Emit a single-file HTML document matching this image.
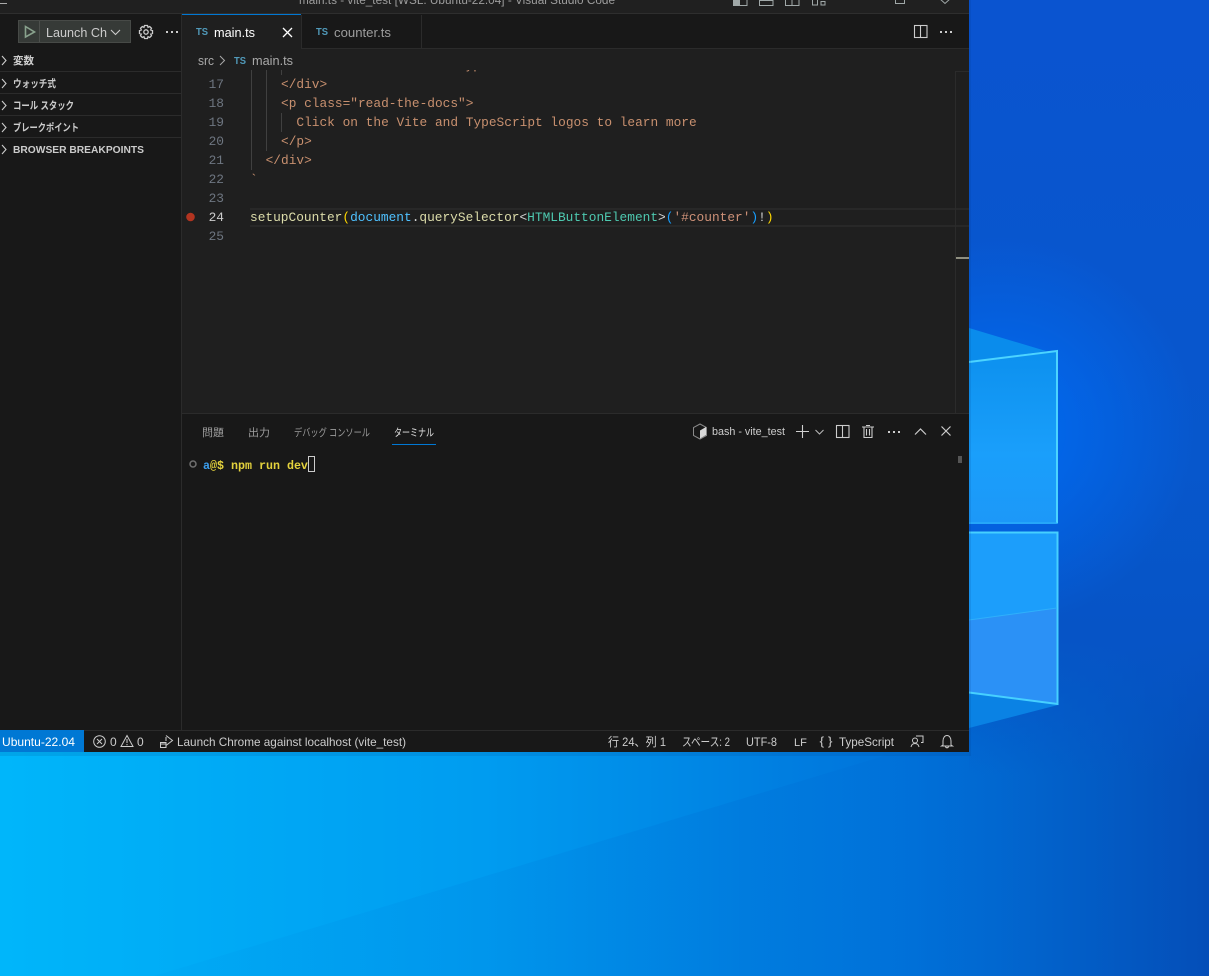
<!DOCTYPE html>
<html><head><meta charset="utf-8"><title>main.ts - vite_test - Visual Studio Code</title>
<style>
html,body{margin:0;padding:0;width:1209px;height:976px;overflow:hidden;background:#0757cf}
svg{display:block}
.ui{font-family:"Liberation Sans","Noto Sans CJK JP",sans-serif}
.m{font-family:"Liberation Mono",monospace;font-size:12.83px;white-space:pre}
.b{font-weight:700}
.side{font-size:10.5px;font-weight:700;fill:#cccccc}
.tab{font-size:10.5px;fill:#9d9d9d}
.st{font-size:12px;fill:#cccccc}
.ln{fill:#6e7681;text-anchor:end}
.s{fill:#c8906f}
.ts{font-size:10px;font-weight:700;fill:#519aba}
.ic{fill:none;stroke:#cccccc;stroke-width:1.1}
</style></head><body>
<svg width="1209" height="976" viewBox="0 0 1209 976" xmlns="http://www.w3.org/2000/svg" class="ui">
<defs>
<linearGradient id="bot" x1="0" y1="0" x2="1" y2="0"><stop offset="0" stop-color="#00b6fa"/><stop offset=".4" stop-color="#009cf0"/><stop offset=".75" stop-color="#0072da"/><stop offset="1" stop-color="#044eb8"/></linearGradient>
<linearGradient id="top" x1="0" y1="0" x2="0" y2="1"><stop offset="0" stop-color="#0a54d0"/><stop offset=".6" stop-color="#0757cc"/><stop offset=".82" stop-color="#0654c6"/><stop offset="1" stop-color="#0654c6" stop-opacity="0"/></linearGradient>
<radialGradient id="glow" gradientUnits="userSpaceOnUse" cx="1000" cy="430" r="195"><stop offset="0" stop-color="#006cf4" stop-opacity=".95"/><stop offset=".5" stop-color="#006cf4" stop-opacity=".5"/><stop offset="1" stop-color="#006cf4" stop-opacity="0"/></radialGradient>
<linearGradient id="p1" x1="0" y1="0" x2="0" y2="1"><stop offset="0" stop-color="#0c90ee"/><stop offset=".6" stop-color="#1a9ffb"/><stop offset="1" stop-color="#1c98f8"/></linearGradient>
<linearGradient id="beam" gradientUnits="userSpaceOnUse" x1="154" y1="0" x2="1000" y2="0"><stop offset="0" stop-color="#0050c0" stop-opacity=".03"/><stop offset=".7" stop-color="#0050c0" stop-opacity=".12"/><stop offset="1" stop-color="#0050c0" stop-opacity="0"/></linearGradient>
</defs>

<!-- wallpaper -->
<rect width="1209" height="976" fill="url(#bot)"/>
<rect x="969" y="0" width="240" height="775" fill="url(#top)"/>
<rect x="969" y="230" width="240" height="400" fill="url(#glow)"/>
<polygon points="887,755 1000,752 1000,976 154,976" fill="url(#beam)"/>
<polygon points="969,328 1046,351 969,362" fill="#0a8cec"/>
<polygon points="969,362 1058,350 1058,524 969,524" fill="url(#p1)"/>
<polygon points="969,532 1058,532 1058,608 969,620" fill="#1c9efb"/>
<polygon points="969,620 1058,608 1058,705 969,693" fill="#2b91f6"/>
<polygon points="969,693 1058,705 969,728" fill="#0a82e4"/>
<path d="M969 362L1057 351V523" fill="none" stroke="#4cd4ff" stroke-width="2"/>
<path d="M969 523H1057" fill="none" stroke="#2fb4fa" stroke-width="1"/>
<path d="M969 532.500H1057.500V704L969 692.500" fill="none" stroke="#46d0ff" stroke-width="2"/>
<path d="M969 620L1057 608" fill="none" stroke="#2fb0fb" stroke-width="1"/>

<!-- window -->
<rect x="0" y="0" width="971" height="756" fill="#003070" opacity=".12"/>
<rect x="0" y="0" width="969" height="752" fill="#181818"/>

<!-- title bar -->
<rect x="0" y="0" width="969" height="14" fill="#202020"/>
<rect x="0" y="13" width="969" height="1" fill="#2e2e2e"/>
<text x="299" y="4" font-size="11.500" fill="#9d9d9d" textLength="316" lengthAdjust="spacingAndGlyphs">main.ts - vite_test [WSL: Ubuntu-22.04] - Visual Studio Code</text>
<rect x="0" y="3" width="7" height="1" fill="#aaa"/>
<g fill="none" stroke="#a0a8a8" stroke-width="1">
<path d="M733.500 -6H747V5.500H733.500Z"/><path d="M759.500 -6H773V5.500H759.500Z"/><path d="M785.500 -6H799V5.500H785.500ZM792 -6V5.500"/>
<path d="M812.500 -2H817.500V5H812.500ZM821 1.500H825V5H821Z"/>
<path d="M895.500 -6H904.500V3.500H895.500Z"/><path d="M939 -2L945 3.500L951 -2"/>
</g>
<path d="M733.500 -6H740V5.500H733.500Z" fill="#a0a8a8"/><path d="M759.500 -6H773V1H759.500Z" fill="#a0a8a8"/>

<!-- sidebar -->
<rect x="181" y="14" width="1" height="716" fill="#2b2b2b"/>
<rect x="18.500" y="20.500" width="112" height="22" fill="#363a37" stroke="#474a47"/>
<rect x="39" y="21" width="1" height="21" fill="#4d504d"/>
<path d="M25.500 26.500V37L34.500 32Z" fill="none" stroke="#89a28d" stroke-width="1.600"/>
<text x="46" y="37" font-size="13" fill="#cccccc" textLength="61" lengthAdjust="spacingAndGlyphs">Launch Ch</text>
<path d="M111 30L115.500 34.500L120 30" class="ic"/>
<g transform="translate(146 32)" fill="none" stroke="#cccccc" stroke-width="1.300">
<circle r="2.200"/>
<path d="M-1.500 -6.500H1.500L2 -4.700L3.700 -5.500L5.500 -3.700L4.700 -2L6.500 -1.500V1.500L4.700 2L5.500 3.700L3.700 5.500L2 4.700L1.500 6.500H-1.500L-2 4.700L-3.700 5.500L-5.500 3.700L-4.700 2L-6.500 1.500V-1.500L-4.700 -2L-5.500 -3.700L-3.700 -5.500L-2 -4.700Z"/>
</g>
<g fill="#cccccc"><rect x="166" y="31" width="2" height="2"/><rect x="171" y="31" width="2" height="2"/><rect x="176" y="31" width="2" height="2"/></g>

<g fill="#2b2b2b"><rect x="0" y="71" width="181" height="1"/><rect x="0" y="93" width="181" height="1"/><rect x="0" y="115" width="181" height="1"/><rect x="0" y="137" width="181" height="1"/></g>
<g class="ic"><path d="M2 56L6 60.500L2 65"/><path d="M2 79L6 83.500L2 88"/><path d="M2 101L6 105.500L2 110"/><path d="M2 123L6 127.500L2 132"/><path d="M2 145L6 149.500L2 154"/></g>
<text x="13" y="64" class="side">変数</text>
<text x="13" y="87" class="side" textLength="43" lengthAdjust="spacingAndGlyphs">ウォッチ式</text>
<text x="13" y="109" class="side" textLength="61" lengthAdjust="spacingAndGlyphs">コール スタック</text>
<text x="13" y="131" class="side" textLength="66" lengthAdjust="spacingAndGlyphs">ブレークポイント</text>
<text x="13" y="153" class="side" textLength="131" lengthAdjust="spacingAndGlyphs">BROWSER BREAKPOINTS</text>

<!-- tabs -->
<rect x="182" y="14" width="787" height="34" fill="#181818"/>
<rect x="182" y="48" width="787" height="1" fill="#2b2b2b"/>
<rect x="182" y="14" width="119" height="35" fill="#1f1f1f"/>
<rect x="182" y="14" width="119" height="1" fill="#0078d4"/>
<rect x="301" y="15" width="1" height="33" fill="#2b2b2b"/>
<rect x="421" y="15" width="1" height="33" fill="#2b2b2b"/>
<text x="196" y="35" class="ts" textLength="12" lengthAdjust="spacingAndGlyphs">TS</text>
<text x="214" y="37" font-size="13" fill="#ffffff" textLength="41" lengthAdjust="spacingAndGlyphs">main.ts</text>
<path d="M283 28L292 37M292 28L283 37" fill="none" stroke="#ffffff" stroke-width="1.300"/>
<text x="316" y="35" class="ts" textLength="12" lengthAdjust="spacingAndGlyphs">TS</text>
<text x="334" y="37" font-size="13" fill="#9d9d9d" textLength="57" lengthAdjust="spacingAndGlyphs">counter.ts</text>
<g fill="none" stroke="#cccccc" stroke-width="1.100"><rect x="914.500" y="25.500" width="12.500" height="12"/><path d="M920.500 25.500V37.500"/></g>
<g fill="#cccccc"><rect x="940" y="31" width="2" height="2"/><rect x="945" y="31" width="2" height="2"/><rect x="950" y="31" width="2" height="2"/></g>

<!-- breadcrumb + editor -->
<rect x="182" y="49" width="787" height="364" fill="#1f1f1f"/>
<text x="198" y="65" font-size="12.500" fill="#a9a9a9" textLength="16" lengthAdjust="spacingAndGlyphs">src</text>
<path d="M220 56L224.500 60.500L220 65" fill="none" stroke="#a9a9a9"/>
<text x="234" y="64" class="ts" textLength="12" lengthAdjust="spacingAndGlyphs">TS</text>
<text x="252" y="65" font-size="12.500" fill="#a9a9a9" textLength="41" lengthAdjust="spacingAndGlyphs">main.ts</text>

<!-- current line -->
<rect x="250" y="208" width="719" height="2" fill="#282828"/>
<rect x="250" y="225" width="719" height="2" fill="#282828"/>
<!-- overview ruler -->
<rect x="955" y="71" width="1" height="342" fill="#2b2b2b"/>
<rect x="955" y="71" width="14" height="1" fill="#2b2b2b"/>
<rect x="956" y="257" width="13" height="2" fill="#8f8f80"/>
<!-- guides -->
<g fill="#404040"><rect x="251" y="70" width="1" height="100"/><rect x="266" y="70" width="1" height="81"/><rect x="281" y="70" width="1" height="5"/><rect x="281" y="113" width="1" height="19"/></g>

<svg x="182" y="70" width="773" height="343" viewBox="182 70 773 343">
<text x="250" y="69" class="m s" xml:space="preserve">      &lt;button id="counter" type="button"&gt;&lt;/button&gt;</text>
</svg>
<g class="m">
<text x="224" y="88" class="m ln">17</text>
<text x="224" y="107" class="m ln">18</text>
<text x="224" y="126" class="m ln">19</text>
<text x="224" y="145" class="m ln">20</text>
<text x="224" y="164" class="m ln">21</text>
<text x="224" y="183" class="m ln">22</text>
<text x="224" y="202" class="m ln">23</text>
<text x="224" y="221" class="m" fill="#cccccc" text-anchor="end">24</text>
<text x="224" y="240" class="m ln">25</text>
<text x="281" y="88" class="m s">&lt;/div&gt;</text>
<text x="281" y="107" class="m s">&lt;p class="read-the-docs"&gt;</text>
<text x="296.400" y="126" class="m s">Click on the Vite and TypeScript logos to learn more</text>
<text x="281" y="145" class="m s">&lt;/p&gt;</text>
<text x="265.600" y="164" class="m s">&lt;/div&gt;</text>
<text x="250" y="183" class="m s">`</text>
<text x="250" y="221" class="m" xml:space="preserve"><tspan fill="#dcdcaa">setupCounter</tspan><tspan fill="#ffd700">(</tspan><tspan fill="#4fc1ff">document</tspan><tspan fill="#d4d4d4">.</tspan><tspan fill="#dcdcaa">querySelector</tspan><tspan fill="#d4d4d4">&lt;</tspan><tspan fill="#4ec9b0">HTMLButtonElement</tspan><tspan fill="#d4d4d4">&gt;</tspan><tspan fill="#179fff">(</tspan><tspan fill="#ce9178">'#counter'</tspan><tspan fill="#179fff">)</tspan><tspan fill="#d4d4d4">!</tspan><tspan fill="#ffd700">)</tspan></text>
</g>
<circle cx="190.500" cy="217" r="4.300" fill="#b23420"/>

<!-- panel -->
<rect x="182" y="413" width="787" height="317" fill="#181818"/>
<rect x="182" y="413" width="787" height="1" fill="#2b2b2b"/>
<text x="202" y="436" class="tab" textLength="22" lengthAdjust="spacingAndGlyphs">問題</text>
<text x="248" y="436" class="tab" textLength="22" lengthAdjust="spacingAndGlyphs">出力</text>
<text x="294" y="436" class="tab" textLength="76" lengthAdjust="spacingAndGlyphs">デバッグ コンソール</text>
<text x="394" y="436" class="tab" style="fill:#e0e0e0" textLength="40" lengthAdjust="spacingAndGlyphs">ターミナル</text>
<rect x="392" y="444" width="44" height="1" fill="#0078d4"/>

<g transform="translate(700 431.500)"><path d="M0 -7.500L6.500 -4V4L0 7.500L-6.500 4V-4Z" fill="none" stroke="#8a8a8a" stroke-width="1"/><path d="M0 -1L6 -4.500V3.500L0 7Z" fill="#d8d8d8"/></g>
<text x="712" y="435" font-size="11" fill="#cccccc" textLength="73" lengthAdjust="spacingAndGlyphs">bash - vite_test</text>
<path d="M796 431.500H809M802.500 425V438" fill="none" stroke="#d0d0d0" stroke-width="1.100"/>
<path d="M815.500 430L819.500 434L823.500 430" fill="none" stroke="#bbbbbb"/>
<g fill="none" stroke="#cccccc" stroke-width="1.100"><rect x="836.500" y="425.500" width="12.500" height="12"/><path d="M842.500 425.500V437.500"/></g>
<g fill="none" stroke="#cccccc" stroke-width="1.100"><path d="M862 427H874M864 427V437.500H872V427M866 425.500H870M866.500 429V435.500M869.500 429V435.500"/></g>
<g fill="#cccccc"><rect x="888" y="431" width="2" height="2"/><rect x="893" y="431" width="2" height="2"/><rect x="898" y="431" width="2" height="2"/></g>
<path d="M915 434.500L920.500 429L926 434.500" fill="none" stroke="#cccccc" stroke-width="1.200"/>
<path d="M941.500 426.500L950.500 435.500M950.500 426.500L941.500 435.500" fill="none" stroke="#cccccc" stroke-width="1.200"/>

<circle cx="193" cy="464" r="3" fill="none" stroke="#707070" stroke-width="1.500"/>
<g font-family="'Liberation Mono',monospace" font-size="11.670" font-weight="700">
<text x="203" y="469" fill="#3b9ff0">a</text>
<text x="210" y="469" fill="#e5d33d">@$ npm run dev</text>
</g>
<rect x="308.500" y="456.500" width="6" height="15" fill="none" stroke="#cccccc"/>
<rect x="958" y="456" width="4" height="7" fill="#555555"/>

<!-- status bar -->
<rect x="0" y="730" width="969" height="22" fill="#181818"/>
<rect x="0" y="730" width="969" height="1" fill="#2b2b2b"/>
<rect x="0" y="730" width="84" height="22" fill="#0078d4"/>
<text x="2" y="746" class="st" style="fill:#fff" textLength="73" lengthAdjust="spacingAndGlyphs">Ubuntu-22.04</text>
<g fill="none" stroke="#cccccc" stroke-width="1"><circle cx="99.500" cy="741.500" r="5.800"/><path d="M97 739L102 744M102 739L97 744"/><path d="M127 735.500L133 746.500H121Z"/><path d="M127 739V743M127 744V745.200"/></g>
<text x="110" y="746" class="st">0</text>
<text x="137" y="746" class="st">0</text>
<g fill="none" stroke="#cccccc" stroke-width="1"><path d="M166 735.500L172.500 740.500L166 745.500"/><rect x="160.500" y="742.500" width="5.500" height="5"/><path d="M160 744H166M166 737V741"/></g>
<text x="177" y="746" class="st" textLength="229" lengthAdjust="spacingAndGlyphs">Launch Chrome against localhost (vite_test)</text>

<text x="608" y="746" class="st" textLength="58" lengthAdjust="spacingAndGlyphs">行 24、列 1</text>
<text x="682" y="746" class="st" textLength="48" lengthAdjust="spacingAndGlyphs">スペース: 2</text>
<text x="746" y="746" class="st" textLength="31" lengthAdjust="spacingAndGlyphs">UTF-8</text>
<text x="794" y="746" class="st" style="font-size:11px">LF</text>
<text x="819.500" y="745" class="st" font-weight="400" textLength="13" lengthAdjust="spacingAndGlyphs">{ }</text>
<text x="839" y="746" class="st" textLength="55" lengthAdjust="spacingAndGlyphs">TypeScript</text>
<g fill="none" stroke="#cccccc" stroke-width="1"><path d="M916 736H923V742.500H921"/><circle cx="915" cy="740.500" r="2.500"/><path d="M911 747C911.500 744.500 913 743.500 915 743.500C917 743.500 918.500 744.500 919 747"/></g>
<path d="M943 745V741C943 737.500 945 735.500 947 735.500C949 735.500 951 737.500 951 741V745L952.500 746H941.500ZM945.500 746.500C945.800 748.200 948.200 748.200 948.500 746.500" fill="none" stroke="#cccccc"/>
</svg>
</body></html>
